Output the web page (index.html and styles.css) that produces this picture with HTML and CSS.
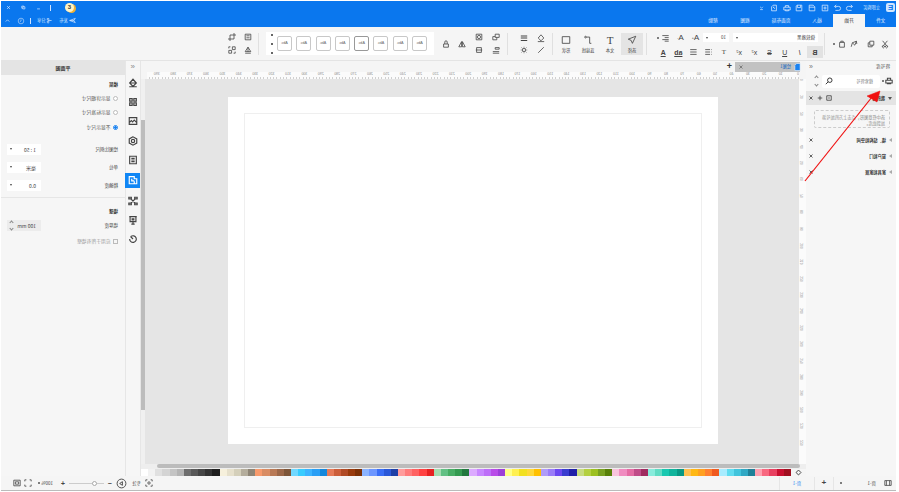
FILE: index.html
```html
<!DOCTYPE html>
<html lang="zh-CN">
<head>
<meta charset="utf-8">
<title>平面图</title>
<link rel="stylesheet" href="styles.css">
</head>
<body>
<div class="stage">
<div class="app">
  <header class="title">
    <div class="title-row">
      <span class="logo">E</span>
      <span class="buy">立即购买</span>
      <div class="quick">
        <svg class="ic" viewBox="0 0 10 10"><path d="M2 3h5a2.500 2.500 0 0 1 0 5H3M2 3l2-2M2 3l2 2"/></svg>
        <svg class="ic" viewBox="0 0 10 10"><path d="M8 3H3a2.500 2.500 0 0 0 0 5h4M8 3L6 1M8 3L6 5"/></svg>
        <svg class="ic" viewBox="0 0 10 10"><path d="M1.500 1.500h7v7h-7zM5 3v4M3 5h4"/></svg>
        <svg class="ic" viewBox="0 0 10 10"><path d="M1.500 3.500l2-2h5v7h-7zM1.500 4h7"/></svg>
        <svg class="ic" viewBox="0 0 10 10"><path d="M1.500 1.500h6l1 1v6h-7zM3 1.500v3h4v-3"/></svg>
        <svg class="ic" viewBox="0 0 10 10"><path d="M1 4h8v3.500H1zM3 4V2h4v2M3 7v1.500h4V7"/></svg>
        <svg class="ic" viewBox="0 0 10 10"><path d="M2 1.500h4l2 2v5H2zM4 6l2-2M6 4H4.500"/></svg>
        <svg class="ic ic-s" viewBox="0 0 10 10"><path d="M3 4l2 2 2-2M3 8h4"/></svg>
      </div>
      <div class="win">
        <span class="badge">3</span>
        <span class="win-sep"></span>
        <svg class="ic ic-s" viewBox="0 0 10 10"><path d="M3 7h4"/></svg>
        <svg class="ic ic-s" viewBox="0 0 10 10"><path d="M3 4h3v3H3zM4.500 4V3h3v3H6"/></svg>
        <svg class="ic ic-s" viewBox="0 0 10 10"><path d="M3 3l4 4M7 3L3 7"/></svg>
      </div>
    </div>
    <div class="title-row">
      <nav class="tabs">
        <span class="tab">文件</span>
        <span class="tab tab-on">开始</span>
        <span class="tab">插入</span>
        <span class="tab tab-w">页面布局</span>
        <span class="tab">视图</span>
        <span class="tab">帮助</span>
      </nav>
      <div class="share">
        <svg class="ic ic-m" viewBox="0 0 10 10"><path d="M1 2l8 3-8 3 2-3zM3 5h6"/></svg>
        <span>发布</span>
        <svg class="ic ic-m gap-l" viewBox="0 0 10 10"><path d="M2 5h5M7 2a1.300 1.300 0 1 0 .1 0zM7 6a1.300 1.300 0 1 0 .1 0z"/></svg>
        <span>分享</span>
        <span class="win-sep"></span>
        <svg class="ic red-dot" viewBox="0 0 10 10"><circle cx="5" cy="5" r="3.500"/><path d="M5 3v2l1.500 1"/></svg>
        <svg class="ic ic-s" viewBox="0 0 10 10"><path d="M2.500 6.500L5 4l2.500 2.500"/></svg>
      </div>
    </div>
  </header>

  <section class="ribbon">
    <div class="group g-clip">
      <svg class="ic" viewBox="0 0 10 10"><path d="M2 1l5 6M8 1L3 7M3 7a1.300 1.300 0 1 0 .1 0zM7 7a1.300 1.300 0 1 0 .1 0z"/></svg>
      <svg class="ic" viewBox="0 0 10 10"><path d="M1.500 1.500h5v5h-5zM3.500 6.500v2h5v-5h-2"/></svg>
      <svg class="ic" viewBox="0 0 10 10"><path d="M2 1.500l5 2-3 3zM7 3.500l1.500 5M2 1.500L1.500 5"/></svg>
      <svg class="ic" viewBox="0 0 10 10"><path d="M2 3h6v6H2zM3.500 3V1.500h3V3"/></svg>
      <span class="dot"></span>
    </div>
    <span class="sep"></span>
    <div class="group g-font">
      <div class="font-row">
        <span class="field f-family"><span>微软雅黑</span><i class="caret"></i></span>
        <span class="field f-size"><span>10</span><i class="caret"></i></span>
        <span class="cell c-a big">A<sup>+</sup></span>
        <span class="cell c-a big">A<sup>-</sup></span>
        <svg class="ic c-a" viewBox="0 0 10 10"><path d="M1 2h8M1 4.500h5M1 7h8M1 9h5"/></svg>
        <span class="dot"></span>
      </div>
      <div class="font-row row-2">
        <span class="cell on bold">B</span>
        <span class="cell ital">I</span>
        <span class="cell und">U</span>
        <span class="cell str">S</span>
        <span class="cell">x<sup>2</sup></span>
        <span class="cell">x<sub>2</sub></span>
        <span class="cell serif">T</span>
        <svg class="ic c-f" viewBox="0 0 10 10"><path d="M3 2h6M3 5h6M3 8h6M1 2h.8M1 5h.8M1 8h.8"/></svg>
        <svg class="ic c-f" viewBox="0 0 10 10"><path d="M1 2h8M1 5h8M1 8h8"/></svg>
        <span class="cell und hl">ab</span>
        <span class="cell und hl">A</span>
      </div>
    </div>
    <span class="sep"></span>
    <div class="group g-tools">
      <div class="tool tool-on">
        <svg class="ic-l" viewBox="0 0 12 12"><path d="M1.500 1.500l9 3.500-3.500 1.500L5.500 10z"/></svg>
        <span>选择</span>
      </div>
      <div class="tool">
        <span class="t-glyph">T</span>
        <span>文本</span>
      </div>
      <div class="tool">
        <svg class="ic-l" viewBox="0 0 12 12"><path d="M2 10h2V2.500h4"/><circle cx="9" cy="2.500" r="1"/></svg>
        <span>连接线</span>
      </div>
      <div class="tool">
        <svg class="ic-l" viewBox="0 0 12 12"><path d="M1.500 2h9v8h-9z"/></svg>
        <span>形状</span>
      </div>
    </div>
    <span class="sep"></span>
    <div class="group g-pair">
      <svg class="ic" viewBox="0 0 10 10"><path d="M5 1l3.500 4L5 8.500 1.500 5zM1 9.500h8"/></svg>
      <svg class="ic" viewBox="0 0 10 10"><path d="M1 2.500h8M1 5h8M1 8h8" stroke-width="1.300"/></svg>
      <svg class="ic" viewBox="0 0 10 10"><path d="M1.500 1.500l7 7"/></svg>
      <svg class="ic" viewBox="0 0 10 10"><circle cx="5" cy="5" r="2"/><path d="M5 1v1M5 8v1M1 5h1M8 5h1M2 2l1 1M7 7l1 1M8 2L7 3M2 8l1-1"/></svg>
    </div>
    <span class="sep"></span>
    <div class="group g-arr">
      <svg class="ic" viewBox="0 0 10 10"><path d="M1 1.500h5v4H1zM4 5.500v3h5v-4H6"/></svg>
      <svg class="ic" viewBox="0 0 10 10"><path d="M1.500 1.500h7v7h-7z"/><circle cx="5" cy="5" r="2"/></svg>
      <svg class="ic ic-tall" viewBox="0 0 10 10"><path d="M4.500 2L1 8.500h3.500zM5.500 2L9 8.500H5.500z"/></svg>
      <svg class="ic ic-tall" viewBox="0 0 10 10"><path d="M2 5h6v4H2zM3.500 5V2.500a1.500 1.500 0 0 1 3 0V5"/></svg>
      <svg class="ic" viewBox="0 0 10 10"><path d="M1 2h5v2H1zM1 7h8M1 9h8"/></svg>
      <svg class="ic" viewBox="0 0 10 10"><path d="M2 2h6v6H2zM1 5h8"/></svg>
    </div>
    <div class="gallery">
      <span class="abc">Abc</span><span class="abc">Abc</span><span class="abc">Abc</span><span class="abc abc-d">Abc</span><span class="abc">Abc</span><span class="abc">Abc</span><span class="abc">Abc</span><span class="abc">Abc</span>
      <span class="g-scroll"><i></i><i></i><i></i></span>
    </div>
    <span class="sep"></span>
    <div class="group g-last">
      <svg class="ic" viewBox="0 0 10 10"><path d="M1.500 1.500h7v7h-7zM3 3.500h4M3 6h4"/></svg>
      <svg class="ic" viewBox="0 0 10 10"><path d="M2.500 0v7.500H10M0 2.500h7.500V10"/></svg>
      <svg class="ic" viewBox="0 0 10 10"><path d="M5 1.500L8.500 7h-7zM5 1.500V7M1.500 9h7"/></svg>
      <svg class="ic" viewBox="0 0 10 10"><path d="M1 1h3.500v3.500H1zM5.500 5.500H9V9H5.500zM7 1h2v2M1 7v2h2"/></svg>
    </div>
  </section>

  <main class="main">
    <aside class="lib">
      <div class="lib-head"><span>符号库</span><span class="chev">»</span></div>
      <div class="lib-search">
        <svg class="ic" viewBox="0 0 10 10"><path d="M1 4h8v3.500H1zM3 4V1.500h4V4M3 7v1.500h4V7" stroke-width="1.300"/></svg>
        <span class="dot"></span>
        <span class="search-box"><span>搜索符号</span><svg class="ic" viewBox="0 0 10 10"><circle cx="4" cy="4" r="2.800" stroke-width="1.200"/><path d="M6 6l3 3" stroke-width="1.200"/></svg></span>
        <span class="updown"><i class="up"></i><i class="down"></i></span>
      </div>
      <div class="lib-row lib-sel">
        <i class="tri"></i><b>我的库</b>
        <span class="row-tools">
          <svg class="ic-xs" viewBox="0 0 8 8"><path d="M1 1h6v6H1zM3 4h2"/></svg>
          <svg class="ic-xs" viewBox="0 0 8 8"><path d="M4 1v6M1 4h6"/></svg>
          <svg class="ic-xs" viewBox="0 0 8 8"><path d="M2 2l4 4M6 2L2 6"/></svg>
        </span>
      </div>
      <div class="drop">选中任意图形，点击上方的加号添加到此库。</div>
      <div class="lib-row"><i class="tri tri-r"></i><b>墙、结构和空间</b><svg class="ic-xs end" viewBox="0 0 8 8"><path d="M2 2l4 4M6 2L2 6"/></svg></div>
      <div class="lib-row"><i class="tri tri-r"></i><b>窗户和门</b><svg class="ic-xs end" viewBox="0 0 8 8"><path d="M2 2l4 4M6 2L2 6"/></svg></div>
      <div class="lib-row"><i class="tri tri-r"></i><b>家具和家居</b><svg class="ic-xs end" viewBox="0 0 8 8"><path d="M2 2l4 4M6 2L2 6"/></svg></div>
    </aside>

    <div class="center">
      <div class="doc-tabs">
        <div class="doc-tab">
          <svg class="doc-ic" viewBox="0 0 8 9"><path d="M1 .5h4l2 2v6H1z"/></svg>
          <span>绘图1</span>
          <svg class="ic-xs end" viewBox="0 0 8 8"><path d="M2 2l4 4M6 2L2 6"/></svg>
        </div>
        <span class="doc-add">+</span>
      </div>
      <div class="ruler-h">
        <span>0</span><span>10</span><span>20</span><span>30</span><span>40</span><span>50</span><span>60</span><span>70</span><span>80</span><span>90</span><span>100</span><span>110</span><span>120</span><span>130</span><span>140</span><span>150</span><span>160</span><span>170</span><span>180</span><span>190</span><span>200</span><span>210</span><span>220</span><span>230</span><span>240</span><span>250</span><span>260</span><span>270</span><span>280</span><span>290</span><span>300</span><span>310</span><span>320</span><span>330</span><span>340</span><span>350</span><span>360</span><span>370</span><span>380</span><span>390</span>
      </div>
      <div class="work">
        <div class="ruler-v">
          <span>0</span><span>10</span><span>20</span><span>30</span><span>40</span><span>50</span><span>60</span><span>70</span><span>80</span><span>90</span><span>100</span><span>110</span><span>120</span><span>130</span><span>140</span><span>150</span><span>160</span><span>170</span><span>180</span><span>190</span><span>200</span><span>210</span><span>220</span>
        </div>
        <div class="canvas">
          <div class="page"><div class="page-in"></div></div>
        </div>
        <div class="vbar"><i></i></div>
      </div>
      <div class="hbar"><i></i></div>
      <div class="palette">
        <svg class="ic pick" viewBox="0 0 10 10"><path d="M5 1.500l3.500 3.500L5 8.500 1.500 5z" stroke-width="1.400"/></svg>
        <div class="swatches">
          <i style="background:#ffffff"></i><i style="background:#f2f2f2"></i><i style="background:#e0e0e0"></i><i style="background:#d4d4d4"></i><i style="background:#c4c4c4"></i><i style="background:#b4b4b4"></i><i style="background:#6e6e6e"></i><i style="background:#595959"></i><i style="background:#464646"></i><i style="background:#333333"></i><i style="background:#1e1e1e"></i>
          <i style="background:#f6f0dc"></i><i style="background:#e6e0cc"></i><i style="background:#d4cfba"></i><i style="background:#b4ad9c"></i><i style="background:#8e8576"></i>
          <i style="background:#f79a6c"></i><i style="background:#d98c63"></i><i style="background:#b87955"></i><i style="background:#9b6748"></i><i style="background:#7d5538"></i>
          <i style="background:#70d8ff"></i><i style="background:#38ccff"></i><i style="background:#3cb4ff"></i><i style="background:#2a9ff5"></i><i style="background:#1488dc"></i>
          <i style="background:#e67a58"></i><i style="background:#cc5e3a"></i><i style="background:#b04a25"></i><i style="background:#983a0c"></i><i style="background:#7c3005"></i>
          <i style="background:#8cb4ff"></i><i style="background:#6c96ff"></i><i style="background:#3a6ef6"></i><i style="background:#2a58d8"></i><i style="background:#1e3fa6"></i>
          <i style="background:#ff9c9c"></i><i style="background:#ff7c7c"></i><i style="background:#ff6262"></i><i style="background:#ff4242"></i><i style="background:#e62222"></i>
          <i style="background:#a4dcb0"></i><i style="background:#62c084"></i><i style="background:#48ad64"></i><i style="background:#349a50"></i><i style="background:#22783e"></i>
          <i style="background:#dcaaff"></i><i style="background:#c886ff"></i><i style="background:#bd6ef8"></i><i style="background:#b84ce8"></i><i style="background:#9c40d8"></i>
          <i style="background:#ffff88"></i><i style="background:#fff050"></i><i style="background:#f2e020"></i><i style="background:#ffd838"></i><i style="background:#ffc000"></i>
          <i style="background:#b09cf8"></i><i style="background:#9a7cf8"></i><i style="background:#6c48f0"></i><i style="background:#3a3cd0"></i><i style="background:#2020a8"></i>
          <i style="background:#c8dc80"></i><i style="background:#b4d040"></i><i style="background:#9cc020"></i><i style="background:#78a020"></i><i style="background:#588008"></i>
          <i style="background:#f8c4dc"></i><i style="background:#f08cc0"></i><i style="background:#e46ca4"></i><i style="background:#c04c88"></i><i style="background:#a02c60"></i>
          <i style="background:#88ecdc"></i><i style="background:#60dcc4"></i><i style="background:#18c8b0"></i><i style="background:#10b49c"></i><i style="background:#089884"></i>
          <i style="background:#ffc050"></i><i style="background:#ffb814"></i><i style="background:#ffa020"></i><i style="background:#ff8030"></i><i style="background:#f05a20"></i>
          <i style="background:#a8ecff"></i><i style="background:#60dcf0"></i><i style="background:#40c4dc"></i><i style="background:#30a8c4"></i><i style="background:#208098"></i>
          <i style="background:#ffa0b0"></i><i style="background:#f86880"></i><i style="background:#e84060"></i><i style="background:#c81030"></i><i style="background:#a01020"></i>
        </div>
      </div>
    </div>

    <nav class="rail">
      <span class="rail-chev">»</span>
      <svg class="rail-ic" viewBox="0 0 12 12"><path d="M6 1.500L10 6 6 10 2 6zM2 6h8M1.500 10.500h9"/></svg>
      <svg class="rail-ic" viewBox="0 0 12 12"><path d="M2 2h3v3H2zM7 2h3v3H7zM2 7h3v3H2zM7 7h3v3H7z"/></svg>
      <svg class="rail-ic" viewBox="0 0 12 12"><path d="M1.500 2h9v8h-9zM1.500 8l3-3 2 2 1.500-1.500 2.500 2.500"/></svg>
      <svg class="rail-ic" viewBox="0 0 12 12"><path d="M6 1l4.500 2.500v5L6 11 1.500 8.500v-5z"/><circle cx="6" cy="6" r="2"/></svg>
      <svg class="rail-ic" viewBox="0 0 12 12"><path d="M2 1.500h8v9H2zM4 4h4M4 6h4M4 8h4"/></svg>
      <span class="rail-on"><svg class="rail-ic" viewBox="0 0 12 12"><path d="M1.500 4.500h3V2h6v8.500h-9zM4.500 7h3V4.500M4.500 10V7.500"/></svg></span>
      <svg class="rail-ic" viewBox="0 0 12 12"><path d="M3 3l6 6M9 3l-6 6M1 1.500h3v2H1zM8 1.500h3v2H8zM1 8.500h3v2H1zM8 8.500h3v2H8z"/></svg>
      <svg class="rail-ic" viewBox="0 0 12 12"><path d="M1.500 2h9M2.500 2v6h7V2M6 8v3M4 11h4M5 4.500h2v1.500H5z"/></svg>
      <svg class="rail-ic" viewBox="0 0 12 12"><path d="M10 6a4 4 0 1 1-1.500-3M6 6l3-3"/></svg>
    </nav>

    <aside class="props">
      <h2 class="props-title">平面图</h2>
      <div class="props-body">
        <h3>楼层</h3>
        <label class="opt"><i class="radio"></i>显示详细尺寸</label>
        <label class="opt"><i class="radio"></i>显示标准尺寸</label>
        <label class="opt"><i class="radio radio-on"></i>不显示尺寸</label>
        <div class="line line-1"><span>绘图比例尺</span><span class="sel"><span>1 : 50</span><i class="caret"></i></span></div>
        <div class="line"><span>单位</span><span class="sel"><span>毫米</span><i class="caret"></i></span></div>
        <div class="line"><span>精确度</span><span class="sel"><span>0.0</span><i class="caret"></i></span></div>
      </div>
      <div class="props-body props-2">
        <h3>墙壁</h3>
        <div class="line line-2"><span>墙厚度</span><span class="sel sel-off"><span>100 mm</span><span class="updown"><i class="up"></i><i class="down"></i></span></span></div>
        <label class="opt opt-off"><i class="check"></i>应用于所有墙壁</label>
      </div>
    </aside>
  </main>

  <footer class="status">
    <svg class="ic" viewBox="0 0 10 10"><path d="M1 2h8v6H1zM3 2v6M7 2v6"/></svg>
    <span class="st-page">页-1</span>
    <span class="dot"></span>
    <span class="st-sep st-sep-a"></span>
    <span class="st-add">+</span>
    <span class="st-sep"></span>
    <span class="st-tab">页-1</span>
    <span class="st-sep"></span>
    <div class="st-right">
      <svg class="ic" viewBox="0 0 10 10"><path d="M1 3V1h2M7 1h2v2M9 7v2H7M3 9H1V7"/><circle cx="5" cy="5" r="1.500"/></svg>
      <span class="st-focus">专注</span>
      <svg class="ic-l" viewBox="0 0 12 12"><circle cx="6" cy="6" r="4.800"/><path d="M5 4l3 2-3 2z"/></svg>
      <span class="st-pm">−</span>
      <span class="slider"><i></i></span>
      <span class="st-pm">+</span>
      <span class="st-zoom">100%</span>
      <span class="dot"></span>
      <svg class="ic st-full" viewBox="0 0 10 10"><path d="M1 3V1h2M7 1h2v2M9 7v2H7M3 9H1V7"/></svg>
      <svg class="ic" viewBox="0 0 10 10"><path d="M1 1.500h8v7H1zM3 3.500h4v3H3z"/></svg>
    </div>
  </footer>

  <svg class="pointer" viewBox="0 0 120 110"><path d="M94 100L27 16" stroke="#f01010" stroke-width="1.200"/><path d="M19 10L32 15 22 21z" fill="#f01010" stroke="#f01010" stroke-width=".5"/></svg>
</div>
</div>
</body>
</html>
```
FILE: styles.css
```css
* { box-sizing: border-box; }
html, body { margin: 0; height: 100%; background: #fff; overflow: hidden; }
.stage {
  width: 899px; height: 492px; padding: 1px 1px 1px 3px;
  transform: scaleX(-1);
  font-family: "Noto Sans CJK SC", "Liberation Sans", sans-serif;
  font-size: 5px; line-height: 1; color: #444;
}
.app { position: relative; width: 895px; height: 490px; display: flex; flex-direction: column; border-bottom: 1px solid #bbb; background: #f5f5f5; }
svg { fill: none; stroke: currentColor; stroke-width: 1; flex: none; overflow: visible; }
.ic { width: 8px; height: 8px; display: block; }
.ic-s { width: 7px; height: 7px; }
.ic-m { width: 7px; height: 7px; }
.ic-l { width: 11px; height: 11px; display: block; }
.ic-xs { width: 6px; height: 6px; display: block; }
.dot { width: 2px; height: 2px; background: #555; border-radius: 50%; flex: none; }
.caret { width: 0; height: 0; border: 1.500px solid transparent; border-top: 2px solid #444; border-bottom: 0; flex: none; display: block; }

/* title */
.title { height: 26px; background: #0a77ee; color: #d6e8ff; flex: none; }
.title-row { height: 13px; display: flex; align-items: center; }
.logo { width: 9px; height: 9px; margin-left: 1px; background: #cfe6ff; color: #0a77ee; border-radius: 2px; font: bold 8px/9px "Liberation Sans", sans-serif; text-align: center; }
.buy { margin-left: 6px; width: 16px; white-space: nowrap; font-size: 4.200px; }
.quick { display: flex; align-items: center; gap: 4.700px; margin-left: 10px; }
.win { margin-left: auto; display: flex; align-items: center; gap: 8px; padding-right: 4px; }
.badge { width: 9px; height: 9px; border-radius: 50%; background: #fff3c4; color: #333; font: bold 6px/9px "Liberation Sans", sans-serif; text-align: center; transform: scaleX(-1); box-shadow: 2px 1px 0 #f2b233; margin-right: 6px; }
.win-sep { width: 1px; height: 6px; background: #cfe3ff; }
.tabs { display: flex; height: 13px; }
.tab { width: 32px; display: flex; align-items: center; justify-content: center; font-size: 4.700px; color: #e8f2ff; }
.tab-w { width: 40px; }
.tab-on { background: #f5f5f5; color: #333; }
.tab:first-child { width: 31px; }
.share { margin-left: auto; display: flex; align-items: center; gap: 1px; padding-right: 3px; font-size: 4.200px; }
.gap-l { margin-left: 5px; }
.share .win-sep { margin: 0 4px 0 5px; }
.red-dot { color: #9cc6f8; margin-right: 5px; }

/* ribbon */
.ribbon { height: 34px; flex: none; display: flex; align-items: center; background: #f5f5f5; border-bottom: 1px solid #e4e4e4; color: #444; }
.sep { width: 1px; height: 22px; background: #e0e0e0; flex: none; }
.group { flex: none; display: grid; align-items: center; justify-items: center; }
.g-clip { width: 71px; grid-template-columns: 8px 20px 14px 10px 6px; justify-content: start; padding-left: 7px; }
.g-font { width: 177px; display: flex; flex-direction: column; align-items: flex-start; gap: 4px; align-self: flex-start; margin-top: 6px; }
.font-row { display: flex; align-items: center; height: 9px; padding-left: 6px; }
.row-2 { height: 12px; padding-left: 1.400px; }
.field { height: 9px; background: #fff; display: flex; align-items: center; justify-content: space-between; padding: 0 3px; font-size: 4.500px; }
.f-family { width: 85px; }
.f-size { width: 26px; margin-left: 4px; }
.cell { width: 15.200px; height: 12px; display: flex; align-items: center; justify-content: center; font: 7px/1 "Liberation Sans", sans-serif; flex: none; }
.cell sup, .cell sub { font-size: 4px; line-height: 1; }
.c-a { width: 15px; }
.c-a.ic { height: 8px; }
.c-f { width: 15.200px; padding: 0 3.500px; height: 8px; }
.font-row .big { font-size: 8px; height: 9px; }
.font-row .big:first-of-type { margin-left: 3.500px; }
.font-row .dot { margin-left: -1px; }
.on { background: #e2e2e2; }
.bold { font-weight: bold; }
.ital { font-style: italic; }
.und { text-decoration: underline; }
.str { text-decoration: line-through; }
.serif { font-family: "Liberation Serif", serif; }
.hl { font-weight: bold; }
.g-tools { width: 93px; display: flex; padding-left: 3px; }
.tool { width: 22px; height: 22px; display: flex; flex-direction: column; align-items: center; justify-content: flex-start; gap: 3px; padding-top: 2px; font-size: 4.200px; white-space: nowrap; flex: none; }
.tool-on { background: #e4e4e4; }
.tool .ic-l { width: 10px; height: 10px; }
.t-glyph { font: 11px/10px "Liberation Serif", serif; height: 10px; }
.g-pair { width: 44px; grid-template-columns: 17px 17px; padding-left: 2.500px; row-gap: 4px; justify-content: start; }
.g-arr { width: 73px; grid-template-columns: 17px 17px 17px 14px; grid-template-rows: 8px 8px; padding-left: 2.500px; row-gap: 5px; justify-content: start; }
.ic-tall { grid-row: span 2; }
.gallery { width: 168px; height: 23px; background: #fff; display: flex; align-items: center; gap: 4.300px; padding-left: 7px; flex: none; }
.abc { width: 15px; height: 15px; border: 1px solid #c8c8c8; border-radius: 2px; display: flex; align-items: center; justify-content: center; font: 3.800px/1 "Liberation Sans", sans-serif; color: #666; flex: none; }
.abc-d { border-color: #999; }
.g-scroll { display: flex; flex-direction: column; gap: 7px; margin-left: 0; }
.g-scroll i { display: block; width: 2px; height: 2px; background: #666; }
.gallery + .sep { margin-left: 7px; }
.g-last { width: 34px; grid-template-columns: 16px 16px; padding-left: 2px; row-gap: 5px; justify-content: start; }

/* main */
.main { height: 415px; flex: none; display: flex; }
.lib { width: 90px; flex: none; background: #f6f6f6; }
.lib-head { height: 11px; display: flex; align-items: center; justify-content: space-between; padding: 0 3px; font-size: 4.700px; }
.lib-head span:first-child { margin-left: 3px; }
.chev { font: 7px/1 "Liberation Sans", sans-serif; color: #777; transform: scaleX(-1); }
.lib-search { height: 18px; display: flex; align-items: center; padding-left: 3px; gap: 1px; }
.search-box { width: 58px; height: 13px; margin-left: 1px; background: #fff; border-radius: 2px; display: flex; align-items: center; justify-content: space-between; padding: 0 3px 0 7px; color: #777; font-size: 4.200px; }
.search-box .ic { color: #333; }
.updown { display: flex; flex-direction: column; gap: 4px; }
.lib-search .updown { margin-left: 3px; }
.up, .down { display: block; width: 3px; height: 3px; border-left: .7px solid #888; border-top: .7px solid #888; transform: rotate(45deg); }
.down { transform: rotate(225deg); }
.lib-row { height: 16px; display: flex; align-items: center; padding: 0 2px 0 4px; font-size: 4.200px; color: #333; }
.lib-row b { margin-left: 3px; }
.lib-sel { height: 14px; margin-top: 1px; background: #e4e4e4; }
.end { margin-left: auto; }
.row-tools { margin-left: auto; display: flex; gap: 3px; }
.tri { width: 0; height: 0; border: 2px solid transparent; border-top: 3px solid #555; border-bottom: 0; }
.tri-r { border: 2px solid transparent; border-left: 3px solid #aaa; border-right: 0; }
.drop { margin: 5px 8px 4px 6px; height: 18px; width: 76px; border: 1px dashed #ccc; border-radius: 2px; padding: 3px 4px; color: #888; font-size: 4.200px; line-height: 6px; }

.center { width: 665px; flex: none; display: flex; flex-direction: column; }
.doc-tabs { height: 11px; flex: none; display: flex; align-items: center; padding-left: 6px; }
.doc-tab { width: 65px; height: 10px; background: #c2c2c2; display: flex; align-items: center; padding: 0 3px 0 0; gap: 3px; font-size: 4.200px; color: #1565c0; }
.doc-tab .ic-xs { color: #666; }
.doc-ic { width: 7px; height: 8px; fill: #1a82f0; stroke: #fff; stroke-width: .6; margin-left: -1px; }
.doc-add { font: bold 9px/9px "Liberation Sans", sans-serif; color: #333; margin-left: 3px; }
.ruler-h { height: 7px; flex: none; display: flex; margin-left: 7px; margin-right: 6px; overflow: hidden; background-color: #fbfbfb; background-image: repeating-linear-gradient(90deg, #d0d0d0 0 1px, transparent 1px 3.280px); background-size: 100% 2px; background-position: 0 100%; background-repeat: no-repeat; }
.ruler-h span { width: 16.400px; flex: none; font: 3.500px/5px "Liberation Sans", sans-serif; color: #888; white-space: nowrap; }
.work { height: 385px; flex: none; display: flex; }
.ruler-v { width: 7px; flex: none; background: #fbfbfb; display: flex; flex-direction: column; overflow: hidden; }
.ruler-v span { height: 16.400px; flex: none; writing-mode: vertical-rl; font: 3.500px/6px "Liberation Sans", sans-serif; color: #888; }
.canvas { width: 654px; flex: none; background: #e5e5e5; padding: 18px 0 0 81px; }
.page { width: 490px; height: 347px; background: #fff; padding: 16px; }
.page-in { height: 100%; border: 1px solid #efefef; }
.vbar { width: 4px; flex: none; background: #f0f0f0; padding-top: 41px; }
.vbar i { display: block; height: 290px; background: #bcbcbc; }
.hbar { height: 5px; flex: none; background: #eee; padding: 0 16px 0 6px; }
.hbar i { display: block; height: 4px; background: #bcbcbc; border-radius: 2px; }
.palette { height: 7px; flex: none; display: flex; align-items: flex-start; background: #f5f5f5; }
.pick { width: 7px; height: 7px; margin: 0 1px 0 4px; color: #444; }
.swatches { display: flex; flex-direction: row-reverse; width: 651px; margin-left: auto; }
.swatches i { width: 7.150px; height: 7px; flex: none; display: block; }

.rail { width: 16px; flex: none; background: #f6f6f6; border-left: 1px solid #e6e6e6; border-right: 1px solid #e6e6e6; display: flex; flex-direction: column; align-items: center; color: #444; }
.rail-chev { font: 8px/1 "Liberation Sans", sans-serif; color: #888; height: 10px; margin-top: 2px; transform: scaleX(-1); }
.rail-ic { width: 10px; height: 10px; margin: 4.700px 0; stroke-width: 1.400; display: block; }
.rail-on { width: 15px; height: 15px; background: #0f86f5; color: #fff; display: flex; align-items: center; justify-content: center; margin: 3px 0; flex: none; }
.rail-on .rail-ic { margin: 0; }
.props { flex: 1; min-width: 0; background: #f6f6f6; }
.props-title { margin: 0; height: 14px; background: #e4e4e4; font-size: 5px; line-height: 14px; font-weight: bold; text-align: center; color: #333; }
.props-body { padding: 6px 6px 0 7px; border-bottom: 1px solid #e6e6e6; height: 123px; }
.props-2 { border: 0; padding-top: 10px; }
h3 { margin: 0 0 4px; font-size: 4.500px; line-height: 6px; color: #333; }
.opt { display: flex; align-items: center; gap: 2.500px; height: 14.500px; color: #555; font-size: 4.800px; }
.radio { width: 5px; height: 5px; border-radius: 50%; border: .7px solid #bbb; background: #fff; flex: none; }
.radio-on { border-color: #1a82f0; background: radial-gradient(#1a82f0 55%, #fff 60%); }
.check { width: 5px; height: 5px; border: .7px solid #bbb; flex: none; }
.opt-off { color: #999; margin-top: 2px; }
.line { height: 18px; display: flex; align-items: center; justify-content: space-between; color: #444; font-size: 4.500px; }
.line-1 { margin-top: 5.500px; }
.line-2 { margin-top: 1px; height: 14px; }
.sel { width: 34px; height: 11px; background: #fff; display: flex; align-items: center; justify-content: space-between; padding: 0 3px 0 5px; font-size: 5px; }
.sel-off { background: #ececec; }
.sel .updown { gap: 3px; }

.status { height: 14px; flex: none; display: flex; align-items: center; background: #f5f5f5; color: #444; padding-left: 4px; }
.st-page { margin-left: 8px; width: 34px; font-size: 4.500px; }
.st-sep { width: 1px; height: 13px; background: #e6e6e6; flex: none; }
.st-sep-a { margin-left: 6px; }
.st-add { width: 18px; text-align: center; font: bold 8px/8px "Liberation Sans", sans-serif; }
.st-tab { width: 34px; text-align: center; color: #1a82f0; font-size: 4.500px; }
.st-right { margin-left: auto; display: flex; align-items: center; padding-right: 12px; }
.st-focus { margin: 0 5px 0 4px; font-size: 4.500px; }
.st-pm { font: bold 7px/7px "Liberation Sans", sans-serif; margin: 0 4px; width: 4px; text-align: center; }
.slider { width: 35px; height: 1px; background: #ccc; position: relative; }
.slider i { position: absolute; left: 7px; top: -2px; width: 5px; height: 5px; border-radius: 50%; background: #fff; border: .7px solid #aaa; }
.st-zoom { margin: 0 2px 0 4px; font-size: 4.500px; width: 11px; }
.st-full { margin-left: 6px; margin-right: 3px; }

.pointer { position: absolute; left: -3px; top: 80px; width: 120px; height: 110px; overflow: visible; }
```
